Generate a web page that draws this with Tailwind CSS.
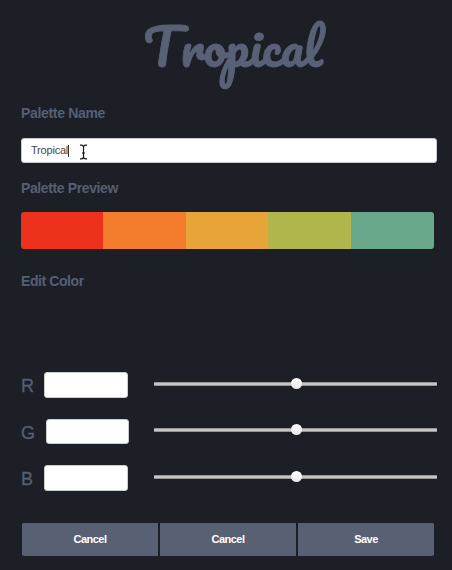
<!DOCTYPE html>
<html lang="en">
<head>
<meta charset="utf-8">
<title>Palette Editor</title>
<script src="https://cdn.jsdelivr.net/npm/@tailwindcss/browser@4"></script>
</head>
<body class="h-[570px] overflow-hidden bg-[#1c1f26] font-['Helvetica_Neue','Liberation_Sans',sans-serif] text-[#555f74]">
<main class="flex h-full flex-col pl-[21px] pr-[15px]">
  <h1 class="h-[104px] shrink-0 pl-[8px] pt-[2px] text-center font-['Pacifico','Lato',cursive] text-[50px] leading-[88px] font-normal [font-kerning:none] [-webkit-text-stroke:0.8px_#596176] text-[#596176]"><span class="tracking-[2px]">T</span>ropical</h1>
  <label for="name" class="h-[34px] shrink-0 text-sm leading-[19px] font-bold tracking-[-0.32px]">Palette Name</label>
  <div class="relative h-[25px] shrink-0">
    <div id="name" class="flex h-full items-center rounded-[3px] border border-[#c9c9d0] bg-white pl-[9px] text-[11px] leading-none tracking-[-0.2px] text-[#454545]"><span>Tropical</span><span class="h-3 w-px bg-[#333]"></span></div>
    <svg class="absolute left-[58px] top-[6px]" width="9" height="17" viewBox="0 0 9 17" fill="none" stroke="#17191d" stroke-width="1.2"><path d="M1 1.200H2.500q2 0 2 2v9.600q0 2-2 2H1M8 1.200H6.500q-2 0-2 2M8 14.800H6.500q-2 0-2-2M3 9h3"/></svg>
  </div>
  <h2 class="mt-[16px] h-[33px] shrink-0 text-sm leading-[19px] font-bold tracking-[-0.38px]">Palette Preview</h2>
  <div class="mr-[3px] grid h-[37px] shrink-0 grid-cols-[82px_83px_82px_83px_83px] overflow-hidden rounded-[3px]">
    <div class="bg-[#ec321d]"></div><div class="bg-[#f37d2d]"></div><div class="bg-[#e6a439]"></div><div class="bg-[#b0b54c]"></div><div class="bg-[#69a88b]"></div>
  </div>
  <h2 class="mt-[23px] h-[100px] shrink-0 text-sm leading-[19px] font-bold tracking-[-0.42px]">Edit Color</h2>

  <div class="flex h-[26px] shrink-0 items-start">
    <span class="w-[23px] text-[18px] leading-[28px] [-webkit-text-stroke:0.3px_#555f74]">R</span>
    <div class="h-[26px] w-[84px] rounded-[3px] border border-[#ccc] bg-white"></div>
    <div class="relative ml-[26px] mt-[10px] h-1 w-[283px] rounded-[1px] border-y border-[#969696] bg-[#c6c6c6]"><span class="absolute left-[137px] top-[-5px] size-[11px] rounded-full bg-linear-to-b from-white to-[#e8e8e8]"></span></div>
  </div>
  <div class="mt-[21px] flex h-[25px] shrink-0 items-start">
    <span class="w-[25px] text-[18px] leading-[28px] [-webkit-text-stroke:0.3px_#555f74]">G</span>
    <div class="h-[25px] w-[83px] rounded-[3px] border border-[#ccc] bg-white"></div>
    <div class="relative ml-[25px] mt-[9px] h-1 w-[283px] rounded-[1px] border-y border-[#969696] bg-[#c6c6c6]"><span class="absolute left-[137px] top-[-5px] size-[11px] rounded-full bg-linear-to-b from-white to-[#e8e8e8]"></span></div>
  </div>
  <div class="mt-[21px] flex h-[26px] shrink-0 items-start">
    <span class="w-[23px] text-[18px] leading-[28px] [-webkit-text-stroke:0.3px_#555f74]">B</span>
    <div class="h-[26px] w-[84px] rounded-[3px] border border-[#ccc] bg-white"></div>
    <div class="relative ml-[26px] mt-[10px] h-1 w-[283px] rounded-[1px] border-y border-[#969696] bg-[#c6c6c6]"><span class="absolute left-[137px] top-[-5px] size-[11px] rounded-full bg-linear-to-b from-white to-[#e8e8e8]"></span></div>
  </div>

  <div class="mt-[32px] ml-px mr-[3px] grid h-[33px] shrink-0 grid-cols-3 gap-[2px] text-[11px] font-bold tracking-[-0.5px] text-white">
    <button class="rounded-l-[2px] bg-[#586073]">Cancel</button>
    <button class="bg-[#586073]">Cancel</button>
    <button class="rounded-r-[2px] bg-[#586073]">Save</button>
  </div>
</main>
</body>
</html>
